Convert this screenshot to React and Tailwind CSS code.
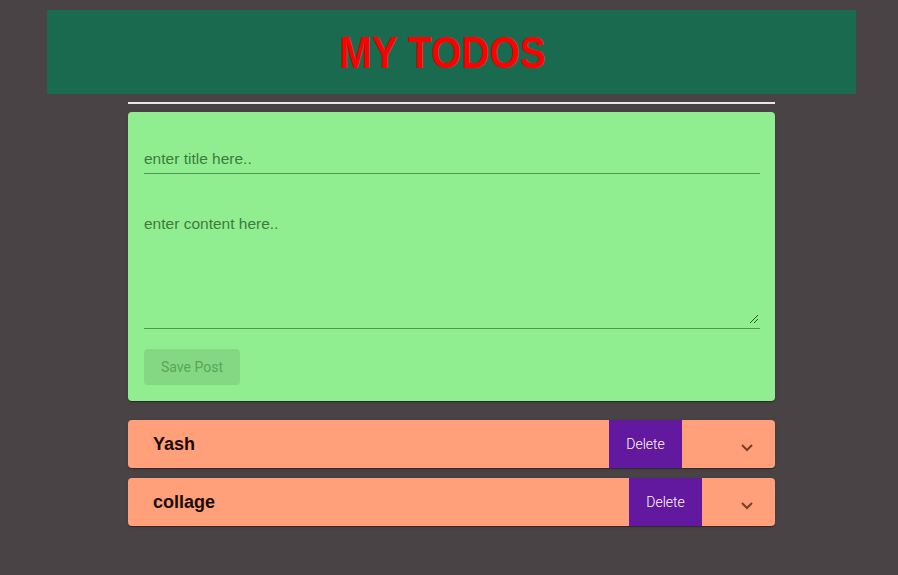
import React from "react";

function Row({ title, gap }) {
  return (
    <div className="flex h-[48px] w-full items-center rounded-[4px] bg-[#ffa07a] shadow-[0_2px_1px_-1px_rgba(0,0,0,0.2),0_1px_1px_0_rgba(0,0,0,0.14),0_1px_3px_0_rgba(0,0,0,0.12)]">
      <div className="pl-[25px] font-['Liberation_Sans',sans-serif] text-[18px] font-bold text-[#1a0a05]">{title}</div>
      <div style={{ marginLeft: gap }} className="flex h-full w-[73px] items-center justify-center bg-[#6219a0] font-['Roboto',sans-serif] text-[14px] font-light text-white">
        Delete
      </div>
      <div className="ml-auto mr-[21px] mt-[6px] text-[#7a3e28]">
        <svg width="14" height="9" viewBox="0 0 14 9">
          <path d="M2 2 L7 7 L12 2" fill="none" stroke="currentColor" strokeWidth="2" />
        </svg>
      </div>
    </div>
  );
}

export default function App() {
  return (
    <div className="min-h-[575px] w-full bg-[#4a4345] pt-[10px]">
      <div className="ml-[47px] flex h-[84px] w-[809px] items-center justify-center bg-[#1a6a4f] pr-[18px]">
        <h1 className="origin-center scale-y-[1.12] font-['Liberation_Sans',sans-serif] text-[39px] font-bold leading-none text-[#ff0000]">
          MY TODOS
        </h1>
      </div>
      <div className="ml-[128px] w-[647px]">
        <div className="mt-[8px] h-[2px] w-full bg-[#e8e8e8]" />
        <div className="mt-[8px] flex h-[289px] flex-col rounded-[4px] bg-[#90ee90] pl-[16px] pr-[15px] pt-[24px] shadow-[0_2px_1px_-1px_rgba(0,0,0,0.2),0_1px_1px_0_rgba(0,0,0,0.14),0_1px_3px_0_rgba(0,0,0,0.12)]">
          <div className="flex h-[38px] items-end border-b border-[#4d9a4d] pb-[3px] font-['Liberation_Sans',sans-serif] text-[15.5px] text-[#3d7b3d]">
            enter title here..
          </div>
          <div className="relative mt-[38px] h-[117px] border-b border-[#4d9a4d] font-['Liberation_Sans',sans-serif] text-[15.5px] text-[#3d7b3d]">
            enter content here..
            <svg className="absolute bottom-[4px] right-[1px]" width="10" height="10" viewBox="0 0 10 10">
              <path d="M1 9 L9 1 M5 9 L9 5" stroke="#2f5a2f" strokeWidth="1" fill="none" />
            </svg>
          </div>
          <div className="mt-[20px] flex h-[36px] w-[96px] items-center justify-center rounded-[4px] bg-[#84d884] font-['Roboto',sans-serif] text-[14px] text-[#5aa55a]">
            Save Post
          </div>
        </div>
        <div className="mt-[19px] flex flex-col gap-[10px]">
          <Row title="Yash" gap="414px" />
          <Row title="collage" gap="414px" />
        </div>
      </div>
    </div>
  );
}
